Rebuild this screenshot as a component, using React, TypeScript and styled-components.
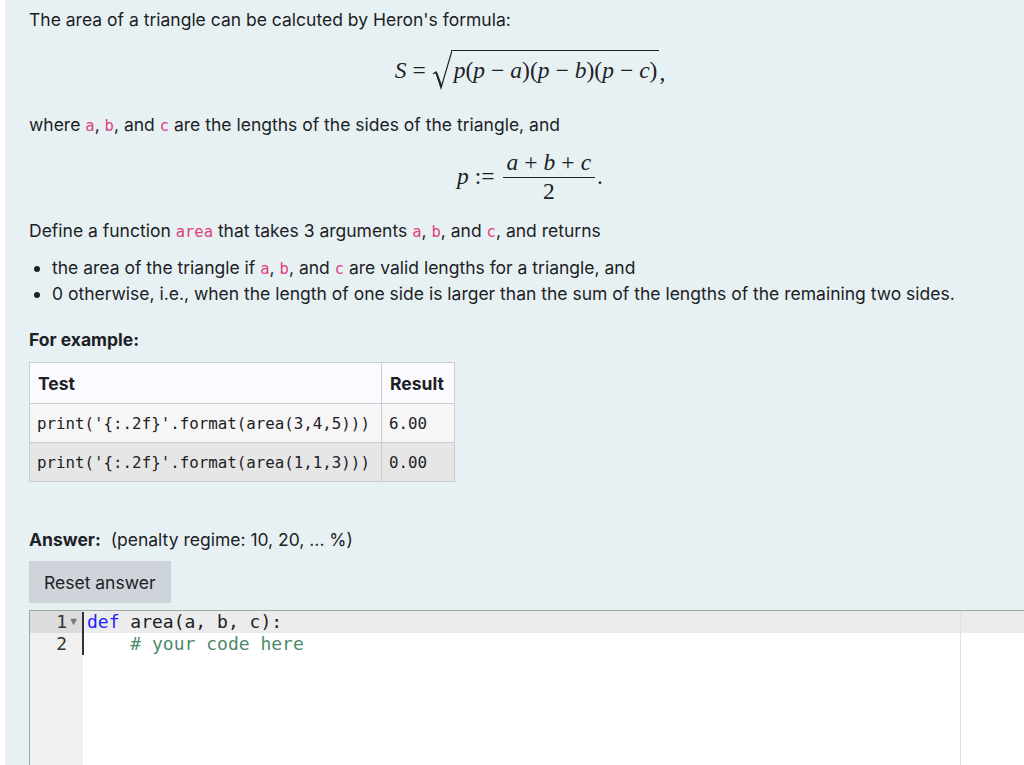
import React from "react";
import styled, { createGlobalStyle } from "styled-components";

const GlobalStyle = createGlobalStyle`
  html, body {
    margin: 0;
    padding: 0;
    background: #ffffff;
    overflow: hidden;
  }
  body {
    font-family: Inter, "Noto Sans", sans-serif;
    color: #1d2125;
  }
`;

const Page = styled.div`
  width: 1050px;
  min-height: 765px;
  margin-left: 5px;
  padding: 7px 24px 0 24px;
  background: #e7f1f4;
  box-sizing: border-box;
  display: flex;
  flex-direction: column;
`;

const Para = styled.p<{ $top?: number }>`
  margin: ${(p) => p.$top ?? 0}px 0 0 0;
  font-size: 17.5px;
  line-height: 26px;
  height: 26px;
`;

const Strong = styled.span`
  font-weight: 700;
`;

const Code = styled.code`
  font-family: "DejaVu Sans Mono", monospace;
  font-size: 15.5px;
  line-height: 1;
  color: #e0407f;
`;

const MathBlock = styled.div<{ $top: number; $height: number }>`
  margin-top: ${(p) => p.$top}px;
  height: ${(p) => p.$height}px;
  display: flex;
  justify-content: center;
  align-items: center;
  font-family: "Liberation Serif", "DejaVu Serif", serif;
  font-size: 23.5px;
  color: #1d2125;
`;

const Var = styled.i`
  font-style: italic;
`;

const Op = styled.span`
  margin: 0 6px;
`;

const Radical = styled.span`
  display: inline-flex;
  align-items: stretch;
`;

const RadicalBody = styled.span`
  border-top: 1.2px solid #1d2125;
  padding: 4px 2px 0 3px;
  line-height: 30px;
`;

const Trail = styled.span`
  align-self: flex-end;
  line-height: 30px;
  margin-bottom: 4px;
`;

const Frac = styled.span`
  display: inline-flex;
  flex-direction: column;
  align-items: center;
  margin: 0 2px;
`;

const Num = styled.span`
  padding: 0 4px 3px 4px;
  line-height: 24px;
  border-bottom: 1.2px solid #1d2125;
`;

const Den = styled.span`
  line-height: 24px;
  padding-top: 1px;
`;

const List = styled.ul`
  margin: 11px 0 0 0;
  padding: 0 0 0 23px;
  font-size: 17.5px;
  line-height: 26px;
`;

const Item = styled.li`
  height: 26px;
`;

const Table = styled.table`
  margin-top: 9px;
  border-collapse: collapse;
  width: 426px;
`;

const Th = styled.th<{ $w?: number }>`
  text-align: left;
  font-size: 17.5px;
  font-weight: 700;
  height: 41px;
  padding: 0 8px;
  border: 1px solid #c9cdd1;
  background: #fbfbff;
  width: ${(p) => (p.$w ? `${p.$w}px` : "auto")};
  box-sizing: border-box;
`;

const Tr = styled.tr<{ $bg: string }>`
  background: ${(p) => p.$bg};
`;

const Td = styled.td`
  height: 38px;
  padding: 0 7px;
  border: 1px solid #c9cdd1;
  font-family: "DejaVu Sans Mono", monospace;
  font-size: 15.8px;
  color: #1d2125;
  white-space: pre;
`;

const ResetButton = styled.button`
  margin-top: 8px;
  align-self: flex-start;
  height: 42px;
  padding: 0 15px;
  border: 0;
  border-radius: 0;
  background: #ced4da;
  color: #1d2125;
  font-family: Inter, "Noto Sans", sans-serif;
  font-size: 17.5px;
`;

const Editor = styled.div`
  margin-top: 7px;
  height: 200px;
  display: flex;
  border-top: 1px solid #a6a6a6;
  border-left: 1px solid #a6a6a6;
  background: #ffffff;
  font-family: "DejaVu Sans Mono", monospace;
  font-size: 18px;
`;

const Gutter = styled.div`
  width: 53px;
  background: #f0f0f0;
  color: #333333;
  flex-shrink: 0;
`;

const GutterCell = styled.div<{ $active?: boolean }>`
  height: 22px;
  line-height: 22px;
  display: flex;
  justify-content: flex-end;
  align-items: center;
  padding-right: 3px;
  background: ${(p) => (p.$active ? "#dcdcdc" : "transparent")};
`;

const Fold = styled.span<{ $show?: boolean }>`
  width: 13px;
  font-size: 11px;
  color: #7a7a7a;
  text-align: center;
  visibility: ${(p) => (p.$show ? "visible" : "hidden")};
`;

const Content = styled.div`
  flex: 1;
  position: relative;
`;

const CodeLine = styled.div<{ $active?: boolean }>`
  height: 22px;
  line-height: 22px;
  padding-left: 4px;
  white-space: pre;
  background: ${(p) => (p.$active ? "#ececec" : "transparent")};
`;

const Cursor = styled.div`
  position: absolute;
  left: -1px;
  top: 1px;
  width: 2px;
  height: 43px;
  background: #333333;
`;

const PrintMargin = styled.div`
  position: absolute;
  left: 877px;
  top: 0;
  bottom: 0;
  width: 1px;
  background: #e0e0e0;
`;

const Keyword = styled.span`
  color: #1f1fff;
`;

const Comment = styled.span`
  color: #4d8a6c;
`;

const RadicalSign = () => (
  <svg
    width="20"
    height="40"
    viewBox="0 0 20 40"
    preserveAspectRatio="none"
    style={{ marginRight: -1, height: "auto" }}
  >
    <path
      d="M1 24 L4 22 L9 38 L20 0.6"
      fill="none"
      stroke="#1d2125"
      strokeWidth="1.2"
      strokeLinejoin="miter"
    />
    <path d="M4 22 L9.3 36" stroke="#1d2125" strokeWidth="2" />
  </svg>
);

const App: React.FC = () => {
  return (
    <>
      <GlobalStyle />
      <Page>
        <Para>The area of a triangle can be calcuted by Heron's formula:</Para>
        <MathBlock $top={16} $height={42}>
          <Var>S</Var>
          <Op>=</Op>
          <Radical>
            <RadicalSign />
            <RadicalBody>
              <Var>p</Var>(<Var>p</Var>
              <Op>−</Op>
              <Var>a</Var>)(<Var>p</Var>
              <Op>−</Op>
              <Var>b</Var>)(<Var>p</Var>
              <Op>−</Op>
              <Var>c</Var>)
            </RadicalBody>
          </Radical>
          <Trail>,</Trail>
        </MathBlock>
        <Para $top={21}>
          where <Code>a</Code>, <Code>b</Code>, and <Code>c</Code> are the
          lengths of the sides of the triangle, and
        </Para>
        <MathBlock $top={12} $height={52}>
          <Var>p</Var>
          <Op>:=</Op>
          <Frac>
            <Num>
              <Var>a</Var>
              <Op>+</Op>
              <Var>b</Var>
              <Op>+</Op>
              <Var>c</Var>
            </Num>
            <Den>2</Den>
          </Frac>
          .
        </MathBlock>
        <Para $top={16}>
          Define a function <Code>area</Code> that takes 3 arguments{" "}
          <Code>a</Code>, <Code>b</Code>, and <Code>c</Code>, and returns
        </Para>
        <List>
          <Item>
            the area of the triangle if <Code>a</Code>, <Code>b</Code>, and{" "}
            <Code>c</Code> are valid lengths for a triangle, and
          </Item>
          <Item>
            0 otherwise, i.e., when the length of one side is larger than the
            sum of the lengths of the remaining two sides.
          </Item>
        </List>
        <Para $top={20}>
          <Strong>For example:</Strong>
        </Para>
        <Table>
          <thead>
            <tr>
              <Th $w={352}>Test</Th>
              <Th>Result</Th>
            </tr>
          </thead>
          <tbody>
            <Tr $bg="#f6f6f6">
              <Td>print('{"{"}:.2f{"}"}'.format(area(3,4,5)))</Td>
              <Td>6.00</Td>
            </Tr>
            <Tr $bg="#e6e6e6">
              <Td>print('{"{"}:.2f{"}"}'.format(area(1,1,3)))</Td>
              <Td>0.00</Td>
            </Tr>
          </tbody>
        </Table>
        <Para $top={45}>
          <Strong>Answer:</Strong>&nbsp; (penalty regime: 10, 20, ... %)
        </Para>
        <ResetButton type="button">Reset answer</ResetButton>
        <Editor>
          <Gutter>
            <GutterCell $active>
              1<Fold $show>▼</Fold>
            </GutterCell>
            <GutterCell>
              2<Fold>▼</Fold>
            </GutterCell>
          </Gutter>
          <Content>
            <PrintMargin />
            <CodeLine $active>
              <Keyword>def</Keyword> area(a, b, c):
            </CodeLine>
            <CodeLine>
              {"    "}
              <Comment># your code here</Comment>
            </CodeLine>
            <Cursor />
          </Content>
        </Editor>
      </Page>
    </>
  );
};

export default App;
